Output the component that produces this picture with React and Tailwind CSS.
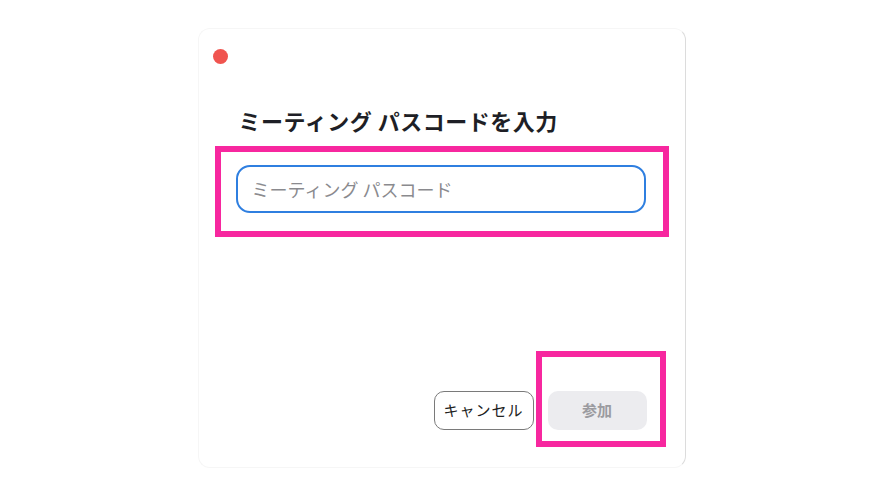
export default function App() {
  return (
    <div className="w-full min-h-screen bg-white pt-[28px] font-['Noto_Sans_CJK_JP',sans-serif]">
      <div className="mx-auto w-[488px] h-[440px] rounded-[12px] border border-[#f6f6f6] border-r-[#dcdcdc] bg-white flex flex-col">
        {/* close dot */}
        <div className="mt-[20px] ml-[14px] w-[15px] h-[15px] rounded-full bg-[#f0544f]" />

        <h1 className="mt-[40px] ml-[40px] text-[22px] leading-[33px] font-bold text-[#1e1f26] tracking-[0.5px]">
          ミーティング パスコードを入力
        </h1>

        {/* highlighted input */}
        <div className="mt-[9px] ml-[16px] w-[454px] h-[91px] border-[6px] border-[#f7279f] pt-[13px] pl-[15px]">
          <input
            className="w-[410px] h-[48px] rounded-[14px] border-2 border-[#2f7fe0] px-[14px] text-[18px] text-[#333] placeholder:text-[#8a8a8e] outline-none bg-white"
            placeholder="ミーティング パスコード"
          />
        </div>

        {/* buttons */}
        <div className="mt-auto mb-[20px] flex justify-end items-start gap-[2px] pr-[19px]">
          <button className="mt-[40px] w-[100px] h-[39px] rounded-[10px] border border-[#7a7a7a] bg-white text-[15px] text-[#222] tracking-[1px]">
            キャンセル
          </button>
          <div className="w-[130px] h-[96px] border-[6px] border-[#f7279f] pt-[34px] pl-[6px]">
            <button className="w-[99px] h-[39px] rounded-[10px] bg-[#ececef] text-[15px] font-bold text-[#9b9ba0]">
              参加
            </button>
          </div>
        </div>
      </div>
    </div>
  );
}
